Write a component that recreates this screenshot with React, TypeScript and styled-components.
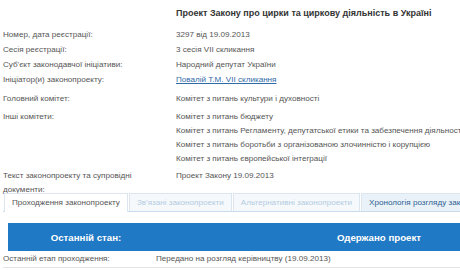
import React from 'react'
import styled, { createGlobalStyle } from 'styled-components'

const GlobalStyle = createGlobalStyle`
  html, body {
    margin: 0;
    padding: 0;
    background: #fff;
    overflow: hidden;
  }
  body {
    font-family: "Liberation Sans", Arial, sans-serif;
    font-size: 8.1px;
    color: #555;
  }
`

const Page = styled.div`
  width: 600px;
  padding: 6px 0 0 3px;
  white-space: nowrap;
`

const Title = styled.h1`
  margin: 0 0 7px 173px;
  font-size: 9px;
  line-height: 14px;
  font-weight: bold;
  color: #333;
`

const Row = styled.div<{ $top: number; $height?: number; $line?: number }>`
  display: flex;
  margin-top: ${({ $top }) => $top}px;
  height: ${({ $height }) => ($height ? `${$height}px` : 'auto')};
  line-height: ${({ $line }) => $line ?? 15}px;
`

const Label = styled.div`
  width: 173px;
  flex-shrink: 0;
  color: #555;
  white-space: normal;
`

const Value = styled.div`
  display: flex;
  flex-direction: column;
  color: #555;
`

const Link = styled.a`
  color: #2f6aa8;
  text-decoration: underline;
`

const Tabs = styled.div`
  display: flex;
  height: 18px;
  padding-left: 1px;
  border-bottom: 1px solid #c8dcee;
  font-size: 8.1px;
`

const Tab = styled.div<{ $kind: 'active' | 'muted' | 'hover' }>`
  padding: 0 7px;
  line-height: 17px;
  border: 1px solid #dbe6f0;
  border-bottom: none;
  margin-right: 1px;
  background: ${({ $kind }) =>
    $kind === 'active' ? '#fff' : $kind === 'hover' ? '#e9f1f9' : '#f6f9fc'};
  color: ${({ $kind }) =>
    $kind === 'active' ? '#555' : $kind === 'hover' ? '#2f5f90' : '#b3cbe0'};
  height: ${({ $kind }) => ($kind === 'active' ? '18px' : '17px')};
  margin-bottom: ${({ $kind }) => ($kind === 'active' ? '-1px' : '0')};
`

const StateBar = styled.div`
  display: grid;
  grid-template-columns: 156px 430px;
  margin: 11px 0 0 5px;
  height: 28px;
  background: #1f79c4;
  color: #fff;
  font-weight: bold;
  font-size: 9.7px;
  align-items: center;
  text-align: center;
`

const StageRow = styled.div`
  display: flex;
  line-height: 14px;
  padding: 1px 0 1px;
  border-bottom: 1px solid #e4e4e4;
`

const StageLabel = styled.div`
  width: 153px;
`

const committees = [
  'Комітет з питань бюджету',
  'Комітет з питань Регламенту, депутатської етики та забезпечення діяльності',
  'Комітет з питань боротьби з організованою злочинністю і корупцією',
  'Комітет з питань європейської інтеграції',
]

export default function App() {
  return (
    <>
      <GlobalStyle />
      <Page>
        <Title>Проект Закону про цирки та циркову діяльність в Україні</Title>
        <Row $top={0}>
          <Label>Номер, дата реєстрації:</Label>
          <Value>3297 від 19.09.2013</Value>
        </Row>
        <Row $top={0}>
          <Label>Сесія реєстрації:</Label>
          <Value>3 сесія VII скликання</Value>
        </Row>
        <Row $top={0}>
          <Label>Суб'єкт законодавчої ініціативи:</Label>
          <Value>Народний депутат України</Value>
        </Row>
        <Row $top={0}>
          <Label>Ініціатор(и) законопроекту:</Label>
          <Value>
            <span>
              <Link>Повалій Т.М. VII скликання</Link>
            </span>
          </Value>
        </Row>
        <Row $top={4}>
          <Label>Головний комітет:</Label>
          <Value>Комітет з питань культури і духовності</Value>
        </Row>
        <Row $top={4} $line={14}>
          <Label>Інші комітети:</Label>
          <Value>
            {committees.map((c) => (
              <span key={c}>{c}</span>
            ))}
          </Value>
        </Row>
        <Row $top={3} $height={24} $line={14}>
          <Label>
            Текст законопроекту та супровідні
            <br />
            документи:
          </Label>
          <Value>Проект Закону 19.09.2013</Value>
        </Row>
        <Tabs>
          <Tab $kind="active">Проходження законопроекту</Tab>
          <Tab $kind="muted">Зв'язані законопроекти</Tab>
          <Tab $kind="muted">Альтернативні законопроекти</Tab>
          <Tab $kind="hover">Хронологія розгляду законопроекту</Tab>
        </Tabs>
        <StateBar>
          <div>Останній стан:</div>
          <div>Одержано проект</div>
        </StateBar>
        <StageRow>
          <StageLabel>Останній етап проходження:</StageLabel>
          <div>Передано на розгляд керівництву (19.09.2013)</div>
        </StageRow>
      </Page>
    </>
  )
}
